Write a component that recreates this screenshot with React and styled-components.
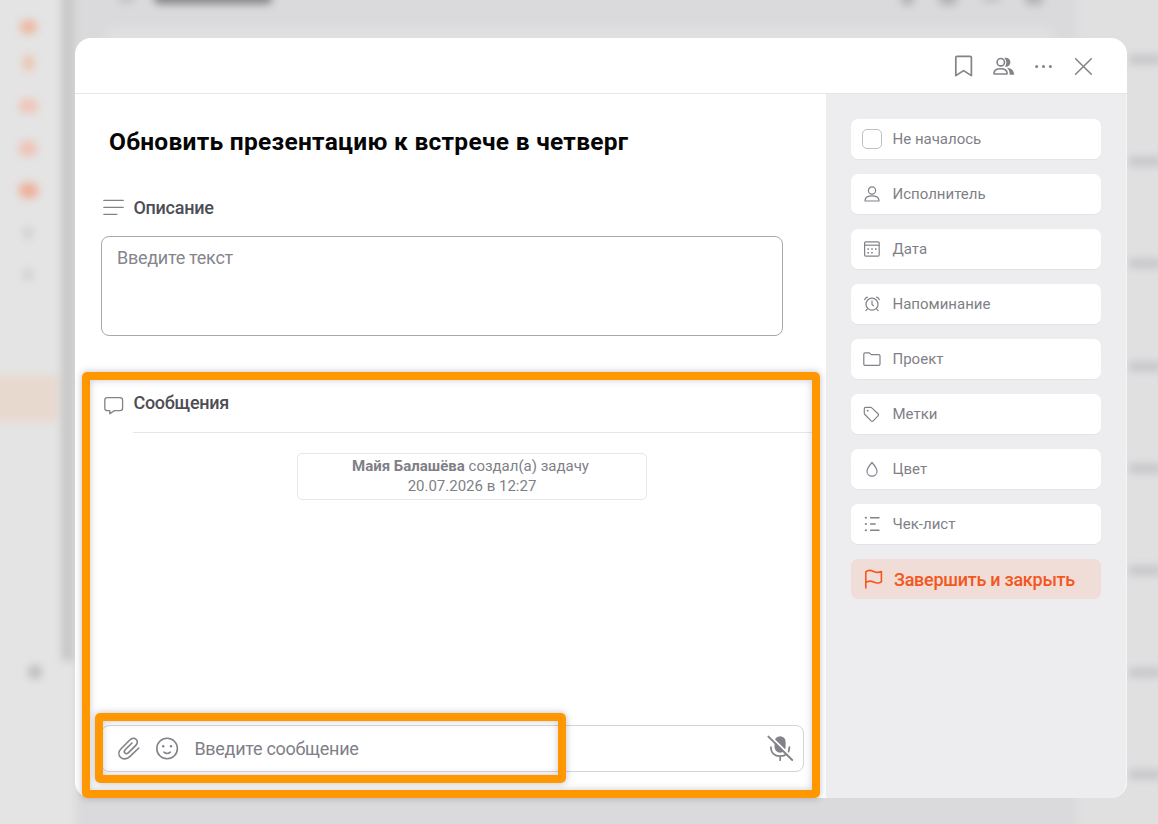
import styled, { createGlobalStyle } from "styled-components";

const badges = [
  { top: 20, color: "#edb8a1", width: 17, height: 14 },
  { top: 55, color: "#ecc3af", width: 11, height: 16 },
  { top: 99, color: "#efc4b8", width: 19, height: 14 },
  { top: 141, color: "#efc2b5", width: 18, height: 15 },
  { top: 183, color: "#efaf98", width: 19, height: 15 },
  { top: 227, color: "#cfcfcf", width: 10, height: 12 },
  { top: 269, color: "#cfcfcf", width: 10, height: 12 },
];

const fields = [
  { label: "Исполнитель", icon: <PersonIcon /> },
  { label: "Дата", icon: <CalendarIcon /> },
  { label: "Напоминание", icon: <AlarmIcon /> },
  { label: "Проект", icon: <FolderIcon /> },
  { label: "Метки", icon: <TagIcon /> },
  { label: "Цвет", icon: <DropIcon /> },
  { label: "Чек-лист", icon: <ChecklistIcon /> },
];

export default function App() {
  return (
    <Screen>
      <GlobalStyle />
      <BlurredPage />
      <Modal>
        <Header>
          <IconButton><BookmarkIcon /></IconButton>
          <IconButton><PeopleIcon /></IconButton>
          <IconButton><DotsIcon /></IconButton>
          <IconButton><CloseIcon /></IconButton>
        </Header>
        <Body>
          <Content>
            <Title>Обновить презентацию к встрече в четверг</Title>
            <SectionTitle>
              <LinesIcon />
              <span>Описание</span>
            </SectionTitle>
            <Description placeholder="Введите текст" />
            <Messages>
              <MessagesTitle>
                <ChatIcon />
                <span>Сообщения</span>
              </MessagesTitle>
              <Divider />
              <Notice>
                <NoticeAuthor>
                  <b>Майя Балашёва</b> создал(а) задачу
                </NoticeAuthor>
                <div>20.07.2026 в 12:27</div>
              </Notice>
              <Composer>
                <ClipIcon />
                <SmileIcon />
                <MessageInput placeholder="Введите сообщение" />
                <MicOffIcon />
              </Composer>
              <PaneHighlight />
              <InputHighlight />
            </Messages>
          </Content>
          <Sidebar>
            <Field>
              <Slot><Checkbox /></Slot>
              <span>Не началось</span>
            </Field>
            {fields.map((field) => (
              <Field key={field.label}>
                <Slot>{field.icon}</Slot>
                <span>{field.label}</span>
              </Field>
            ))}
            <FinishButton>
              <FlagIcon />
              <span>Завершить и закрыть</span>
            </FinishButton>
          </Sidebar>
        </Body>
      </Modal>
    </Screen>
  );
}

function BlurredPage() {
  return (
    <Page>
      <PageNav>
        {badges.map((b) => (
          <Badge key={b.top} $color={b.color} $width={b.width} $height={b.height} $top={b.top} />
        ))}
        <ActiveItem />
        <Gear />
      </PageNav>
      <Scroll />
      <PageMain>
        <PageHead>
          <Blob $w={16} $h={14} $c="#c2c2c4" />
          <Blob $w={118} $h={16} $c="#858587" />
          <Tools>
            <Blob $w={13} $h={18} $c="#b0b0b2" />
            <Blob $w={18} $h={18} $c="#b0b0b2" />
            <Blob $w={18} $h={12} $c="#c0c0c2" />
            <Blob $w={18} $h={18} $c="#b2b2b4" />
          </Tools>
        </PageHead>
        <PageCard />
      </PageMain>
      <PageTimes>
        {[60, 162, 264, 366, 468, 570, 673, 775].map((t) => (
          <Blob key={t} $w={34} $h={9} $c="#c4c4c8" />
        ))}
      </PageTimes>
    </Page>
  );
}

function BookmarkIcon() {
  return (
    <svg width="24" height="24" viewBox="0 0 24 24" fill="none" stroke="#828289" strokeWidth="1.7" strokeLinejoin="round">
      <path d="M3.8 21.6V3.6Q3.8 2.4 5 2.4H18.2Q19.4 2.4 19.4 3.6V21.6L11.6 16.6Z" />
    </svg>
  );
}
function PeopleIcon() {
  return (
    <svg width="24" height="24" viewBox="0 0 24 24" fill="none" stroke="#828289" strokeWidth="1.6">
      <circle cx="8.8" cy="8.2" r="3.7" />
      <path d="M1.9 19.3C2.1 16.1 4.8 14.7 8.6 14.7S15 16.1 15.2 19.3Q15.2 20 14.4 20H2.7Q1.9 20 1.9 19.3Z" />
      <path d="M12.3 3.9C16 3.3 18.4 5.3 18.4 8.3S15.6 13.3 12.9 12.7C14.9 10.2 14.9 6.5 12.3 3.9ZM15 13.7C19.4 14.1 22.1 16.4 22.1 20.8H17.6C17.8 17.7 16.9 15.4 15 13.7Z" fill="#828289" stroke="none" />
    </svg>
  );
}
function DotsIcon() {
  return (
    <svg width="24" height="24" viewBox="0 0 24 24" fill="#828289">
      <circle cx="4.6" cy="12.4" r="1.5" />
      <circle cx="11.5" cy="12.4" r="1.5" />
      <circle cx="18.4" cy="12.4" r="1.5" />
    </svg>
  );
}
function CloseIcon() {
  return (
    <svg width="24" height="24" viewBox="0 0 24 24" stroke="#828289" strokeWidth="1.5" strokeLinecap="round">
      <path d="M3.6 4.7 19.3 20.2M19.3 4.7 3.6 20.2" />
    </svg>
  );
}
function LinesIcon() {
  return (
    <svg width="22" height="18" viewBox="0 0 22 18" stroke="#828289" strokeWidth="1.4" strokeLinecap="round">
      <path d="M1.9 2.4H21.2M1.9 9.4H21.2M1.9 16.4H14.8" />
    </svg>
  );
}
function ChatIcon() {
  return (
    <svg width="20" height="20" viewBox="0 0 20 20" fill="none" stroke="#828289" strokeWidth="1.3" strokeLinejoin="round">
      <path d="M3.4 2.6H16Q18.6 2.6 18.6 5.2V13Q18.6 15.6 16 15.6H10.4L5.8 18.8V15.6H3.4Q.8 15.6 .8 13V5.2Q.8 2.6 3.4 2.6Z" />
    </svg>
  );
}
function ClipIcon() {
  return (
    <svg width="24" height="24" viewBox="0 0 24 24" fill="none" stroke="#828289" strokeWidth="1.6" strokeLinecap="round">
      <path d="M21.8 11 12.8 19.7C9.8 22.6 5.7 22.5 3.5 20.3S1.3 14.5 4.1 11.7L12.8 3C14.9 1 17.6 .9 19.2 2.5S20.7 6.5 18.8 8.4L11.5 15.6C10.3 16.8 8.8 16.9 7.9 16S7.3 13.6 8.4 12.5L15 6" />
    </svg>
  );
}
function SmileIcon() {
  return (
    <svg width="24" height="24" viewBox="0 0 24 24" fill="none" stroke="#828289" strokeWidth="1.6" strokeLinecap="round">
      <circle cx="12.1" cy="11.5" r="10.3" />
      <path d="M8.9 15.2Q12.1 17.8 15.3 15.2" />
      <circle cx="8.2" cy="9.2" r="1.2" fill="#828289" stroke="none" />
      <circle cx="16" cy="9.2" r="1.2" fill="#828289" stroke="none" />
    </svg>
  );
}
function MicOffIcon() {
  return (
    <svg width="28" height="28" viewBox="0 0 28 28" fill="none" stroke="#828289" strokeWidth="1.7" strokeLinecap="round">
      <rect x="8.6" y="1.2" width="11" height="16.5" rx="5.5" fill="#828289" stroke="none" />
      <path d="M4.9 12C4.9 18 8.6 21.2 14.1 21.2S23.4 18 23.4 12M14.2 21.2V25.2" />
      <path d="M3.4 .4 27.6 24.2" stroke="#fff" strokeWidth="2.2" />
      <path d="M2.4 1.6 26.2 25" strokeWidth="1.9" />
    </svg>
  );
}
function PersonIcon() {
  return (
    <svg width="18" height="18" viewBox="0 0 18 18" fill="none" stroke="#828289" strokeWidth="1.2">
      <circle cx="9" cy="5.5" r="3.6" />
      <path d="M2 15.4C2.3 12.3 5 10.9 9 10.9S15.7 12.3 16 15.4Q16 16 15.4 16H2.6Q2 16 2 15.4Z" />
    </svg>
  );
}
function CalendarIcon() {
  return (
    <svg width="18" height="18" viewBox="0 0 18 18" fill="none" stroke="#828289" strokeWidth="1.2">
      <rect x="1.6" y="1.9" width="14.6" height="14.2" rx="1.2" />
      <path d="M1.6 5.2H16.2" />
      <path d="M4.4 9H6M8.2 9H9.8M12 9H13.6M4.4 12.8H6M8.2 12.8H9.8" strokeWidth="1.5" />
    </svg>
  );
}
function AlarmIcon() {
  return (
    <svg width="18" height="18" viewBox="0 0 18 18" fill="none" stroke="#828289" strokeWidth="1.2" strokeLinecap="round" strokeLinejoin="round">
      <circle cx="9" cy="9.2" r="6" />
      <path d="M9 5.8V9.4L10.6 10.8M1.7 4.6Q2.2 2.7 4.4 2.2M16.3 4.6Q15.8 2.7 13.6 2.2M4.6 13.7 2.9 15.6M13.4 13.7 15.1 15.6" />
    </svg>
  );
}
function FolderIcon() {
  return (
    <svg width="18" height="18" viewBox="0 0 18 18" fill="none" stroke="#828289" strokeWidth="1.2" strokeLinejoin="round">
      <path d="M1.9 2.8H6.1L8.3 4.6H15.7Q17 4.6 17 5.9V14Q17 15.3 15.7 15.3H2Q.8 15.3 .8 14V3.9Q.8 2.8 1.9 2.8Z" />
    </svg>
  );
}
function TagIcon() {
  return (
    <svg width="18" height="18" viewBox="0 0 18 18" fill="none" stroke="#828289" strokeWidth="1.2" strokeLinejoin="round">
      <path d="M2.6 2.4H7.6Q8.3 2.4 8.8 2.9L15 8.7Q16.1 9.7 15 10.8L10.2 15.8Q9.2 16.9 8.1 15.8L1.9 9.5Q1.3 8.9 1.3 8.2V3.7Q1.3 2.4 2.6 2.4Z" />
      <circle cx="4.7" cy="5.7" r=".9" fill="#828289" stroke="none" />
    </svg>
  );
}
function DropIcon() {
  return (
    <svg width="18" height="18" viewBox="0 0 18 18" fill="none" stroke="#828289" strokeWidth="1.2" strokeLinejoin="round">
      <path d="M9 2.5C11.8 5.7 14 8.6 14 11.2C14 14.1 11.8 16.1 9 16.1S4 14.1 4 11.2C4 8.6 6.2 5.7 9 2.5Z" />
    </svg>
  );
}
function ChecklistIcon() {
  return (
    <svg width="18" height="18" viewBox="0 0 18 18" fill="none" stroke="#828289" strokeWidth="1.4" strokeLinecap="round">
      <path d="M7.6 2.7H16M7.6 9H12.2M7.6 15.3H16" />
      <path d="M2.8 2.7H3M2.8 9H3M2.8 15.3H3" strokeWidth="2" />
    </svg>
  );
}
function FlagIcon() {
  return (
    <svg width="20" height="22" viewBox="0 0 20 22" fill="none" stroke="#f4561c" strokeWidth="1.6" strokeLinecap="round" strokeLinejoin="round">
      <path d="M1.8 19V2.8C3.8 1 6.9 1.2 9.6 2.4S14.9 3.8 17.4 2.5V12.8C14.9 14.4 12.3 14.3 9.6 13S4 12 1.8 13.7" />
    </svg>
  );
}

const GlobalStyle = createGlobalStyle`
  * {
    box-sizing: border-box;
  }
  body {
    margin: 0;
    overflow: hidden;
    font-family: Roboto, "Liberation Sans", sans-serif;
  }
`;
const Screen = styled.div`
  position: relative;
  width: 1158px;
  height: 824px;
  padding: 38px 0 0 75px;
  overflow: hidden;
  background: #dadadc;
`;
const Page = styled.div`
  position: absolute;
  top: 0;
  left: -20px;
  width: 1198px;
  height: 824px;
  display: flex;
  filter: blur(4px);
`;
const PageNav = styled.div`
  position: relative;
  width: 95px;
  margin: -20px 0;
  background: #e4e4e4;
`;
const Badge = styled.div`
  position: absolute;
  left: ${(p) => 48 - p.$width / 2}px;
  top: ${(p) => p.$top + 20}px;
  width: ${(p) => p.$width}px;
  height: ${(p) => p.$height}px;
  border-radius: 6px;
  background: ${(p) => p.$color};
`;
const ActiveItem = styled.div`
  position: absolute;
  left: 0;
  top: 395px;
  width: 78px;
  height: 47px;
  background: #e8d9cf;
`;
const Gear = styled.div`
  position: absolute;
  left: 48px;
  top: 685px;
  width: 14px;
  height: 14px;
  border-radius: 50%;
  background: #bcbcbc;
`;
const Scroll = styled.div`
  position: relative;
  width: 13px;
  height: 681px;
  margin: -20px 0 0 -13px;
  background: linear-gradient(90deg, #c0c0c0, #d0d0d1);
`;
const PageMain = styled.div`
  width: 1002px;
  margin: -20px 0;
  padding-top: 7px;
  background: #dadadc;
`;
const PageHead = styled.div`
  display: flex;
  align-items: center;
  gap: 20px;
  height: 18px;
  padding: 0 34px 0 43px;
`;
const Tools = styled.div`
  display: flex;
  align-items: center;
  gap: 25px;
  margin-left: auto;
`;
const PageCard = styled.div`
  height: 40px;
  margin: 22px 22px 0 30px;
  border-radius: 12px;
  background: #e0e0e1;
`;
const PageTimes = styled.div`
  display: flex;
  flex-direction: column;
  align-items: flex-end;
  gap: 93.2px;
  flex: 1;
  margin: -20px 0;
  padding: 75px 16px 0 0;
  background: #e0e0e1;
`;
const Blob = styled.div`
  flex-shrink: 0;
  width: ${(p) => p.$w}px;
  height: ${(p) => p.$h}px;
  border-radius: 5px;
  background: ${(p) => p.$c};
`;
const Modal = styled.div`
  position: relative;
  display: flex;
  flex-direction: column;
  width: 1052px;
  height: 760px;
  border-radius: 16px;
  background: #fff;
`;
const Header = styled.div`
  display: flex;
  justify-content: flex-end;
  align-items: center;
  height: 56px;
  padding: 1px 31px 0 0;
  gap: 16px;
  border-bottom: 1px solid #e6e6e8;
`;
const IconButton = styled.button`
  display: flex;
  width: 24px;
  height: 24px;
  padding: 0;
  border: 0;
  background: none;
`;
const Body = styled.div`
  display: flex;
  height: 704px;
`;
const Content = styled.div`
  display: flex;
  flex-direction: column;
  width: 751px;
  padding-top: 32px;
`;
const Title = styled.h1`
  margin: 0 0 37px 34px;
  font-size: 24.5px;
  line-height: 32px;
  font-weight: 700;
  letter-spacing: 0.28px;
  color: #050505;
`;
const SectionTitle = styled.div`
  display: flex;
  align-items: center;
  gap: 9.4px;
  height: 24px;
  margin: 0 0 17px 27px;
  font-size: 18px;
  font-weight: 500;
  letter-spacing: -0.25px;
  color: #4d4d55;
`;
const Description = styled.textarea`
  display: block;
  width: 682px;
  height: 100px;
  margin: 0 0 36px 26px;
  padding: 10px 15px;
  border: 1px solid #a9a9ad;
  border-radius: 8px;
  resize: none;
  background: #fff;
  font-family: inherit;
  font-size: 18px;
  line-height: 22px;
  letter-spacing: -0.27px;
  &::placeholder {
    color: #85858d;
    opacity: 1;
  }
`;
const Messages = styled.section`
  position: relative;
  display: flex;
  flex-direction: column;
  width: 738px;
  height: 426px;
  margin-left: 7px;
  padding: 18px 8px 26px 19px;
`;
const MessagesTitle = styled(SectionTitle)`
  margin: 0 0 18px 3px;
  svg {
    margin-top: 6px;
  }
`;
const Divider = styled.div`
  height: 1px;
  margin-left: 32px;
  flex-shrink: 0;
  background: #e6e6e8;
`;
const Notice = styled.div`
  width: 350px;
  height: 47px;
  margin: 20px 0 0 196px;
  padding-top: 2px;
  border: 1px solid #e6e6e8;
  border-radius: 5px;
  text-align: center;
  font-size: 15px;
  line-height: 20px;
  color: #7f7f87;
`;
const NoticeAuthor = styled.div`
  padding-right: 3px;
`;
const Composer = styled.div`
  display: flex;
  align-items: center;
  width: 703px;
  height: 47px;
  margin-top: auto;
  padding: 0 9px 0 15px;
  gap: 14px;
  border: 1px solid #d4d4d8;
  border-radius: 8px;
`;
const MessageInput = styled.input`
  flex: 1;
  padding: 0 0 0 1.4px;
  border: 0;
  background: none;
  font-family: inherit;
  font-size: 18px;
  letter-spacing: -0.28px;
  &::placeholder {
    color: #7f7f87;
    opacity: 1;
  }
`;
const Highlight = styled.div`
  position: absolute;
  border: 8px solid #ff9800;
  border-radius: 5px;
  box-shadow: 0 0 7px rgba(40, 40, 70, 0.3), inset 0 0 7px rgba(40, 40, 70, 0.25);
  pointer-events: none;
`;
const PaneHighlight = styled(Highlight)`
  inset: 0;
`;
const InputHighlight = styled(Highlight)`
  left: 13px;
  bottom: 15px;
  width: 471px;
  height: 70px;
`;
const Sidebar = styled.aside`
  display: flex;
  flex-direction: column;
  gap: 15px;
  flex: 1;
  padding: 25px 25px 0;
  border-right: 1px solid #f6f6f7;
  border-radius: 0 0 16px 0;
  background: #ededef;
`;
const Field = styled.div`
  display: flex;
  align-items: center;
  gap: 10.5px;
  height: 40px;
  padding-left: 11px;
  border-radius: 7px;
  background: #fff;
  box-shadow: 0 1px 1px rgba(0, 0, 0, 0.04);
  font-size: 15px;
  color: #7f7f87;
`;
const Slot = styled.div`
  display: flex;
  align-items: center;
  justify-content: center;
  width: 20px;
  height: 20px;
`;
const Checkbox = styled.div`
  width: 20px;
  height: 20px;
  border: 1px solid #c0c0c5;
  border-radius: 5px;
`;
const FinishButton = styled.button`
  display: flex;
  align-items: center;
  gap: 10px;
  height: 40px;
  padding: 1px 0 0 13px;
  border: 0;
  border-radius: 7px;
  background: #f0ddd8;
  font-family: inherit;
  font-size: 18px;
  font-weight: 500;
  letter-spacing: -0.27px;
  color: #f4561c;
`;
